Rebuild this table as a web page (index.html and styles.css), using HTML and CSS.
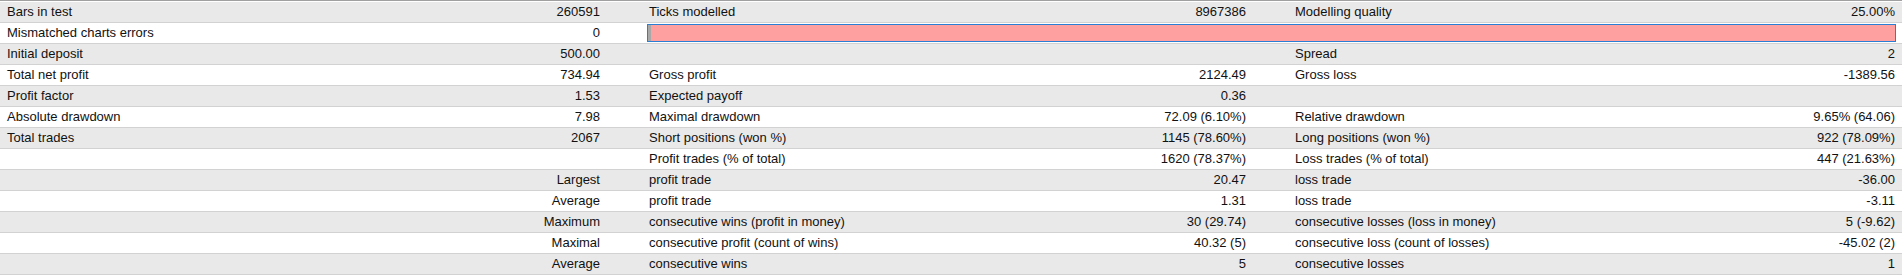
FILE: index.html
```html
<!DOCTYPE html>
<html>
<head>
<meta charset="utf-8">
<link rel="stylesheet" href="styles.css">
</head>
<body>
<div class="report">
  <div class="row alt">
    <div class="lbl">Bars in test</div><div class="val">260591</div>
    <div class="lbl2">Ticks modelled</div><div class="val2">8967386</div>
    <div class="lbl3">Modelling quality</div><div class="val3">25.00%</div>
  </div>
  <div class="row">
    <div class="lbl">Mismatched charts errors</div><div class="val">0</div>
    <div class="bar"><div class="bar-fill"></div></div>
  </div>
  <div class="row alt">
    <div class="lbl">Initial deposit</div><div class="val">500.00</div>
    <div class="lbl2"></div><div class="val2"></div>
    <div class="lbl3">Spread</div><div class="val3">2</div>
  </div>
  <div class="row">
    <div class="lbl">Total net profit</div><div class="val">734.94</div>
    <div class="lbl2">Gross profit</div><div class="val2">2124.49</div>
    <div class="lbl3">Gross loss</div><div class="val3">-1389.56</div>
  </div>
  <div class="row alt">
    <div class="lbl">Profit factor</div><div class="val">1.53</div>
    <div class="lbl2">Expected payoff</div><div class="val2">0.36</div>
    <div class="lbl3"></div><div class="val3"></div>
  </div>
  <div class="row">
    <div class="lbl">Absolute drawdown</div><div class="val">7.98</div>
    <div class="lbl2">Maximal drawdown</div><div class="val2">72.09 (6.10%)</div>
    <div class="lbl3">Relative drawdown</div><div class="val3">9.65% (64.06)</div>
  </div>
  <div class="row alt">
    <div class="lbl">Total trades</div><div class="val">2067</div>
    <div class="lbl2">Short positions (won %)</div><div class="val2">1145 (78.60%)</div>
    <div class="lbl3">Long positions (won %)</div><div class="val3">922 (78.09%)</div>
  </div>
  <div class="row">
    <div class="lbl"></div><div class="val"></div>
    <div class="lbl2">Profit trades (% of total)</div><div class="val2">1620 (78.37%)</div>
    <div class="lbl3">Loss trades (% of total)</div><div class="val3">447 (21.63%)</div>
  </div>
  <div class="row alt">
    <div class="lbl"></div><div class="val">Largest</div>
    <div class="lbl2">profit trade</div><div class="val2">20.47</div>
    <div class="lbl3">loss trade</div><div class="val3">-36.00</div>
  </div>
  <div class="row">
    <div class="lbl"></div><div class="val">Average</div>
    <div class="lbl2">profit trade</div><div class="val2">1.31</div>
    <div class="lbl3">loss trade</div><div class="val3">-3.11</div>
  </div>
  <div class="row alt">
    <div class="lbl"></div><div class="val">Maximum</div>
    <div class="lbl2">consecutive wins (profit in money)</div><div class="val2">30 (29.74)</div>
    <div class="lbl3">consecutive losses (loss in money)</div><div class="val3">5 (-9.62)</div>
  </div>
  <div class="row">
    <div class="lbl"></div><div class="val">Maximal</div>
    <div class="lbl2">consecutive profit (count of wins)</div><div class="val2">40.32 (5)</div>
    <div class="lbl3">consecutive loss (count of losses)</div><div class="val3">-45.02 (2)</div>
  </div>
  <div class="row alt">
    <div class="lbl"></div><div class="val">Average</div>
    <div class="lbl2">consecutive wins</div><div class="val2">5</div>
    <div class="lbl3">consecutive losses</div><div class="val3">1</div>
  </div>
</div>
</body>
</html>
```
FILE: styles.css
```css
html, body {
  margin: 0;
  padding: 0;
  background: #ffffff;
}
body {
  font-family: "Liberation Sans", Arial, sans-serif;
  font-size: 13px;
  color: #111111;
}
.report {
  width: 1902px;
  border-top: 1px solid #a0a0a0;
  padding-top: 1px;
}
.row {
  display: grid;
  grid-template-columns: 320px 323px 317px 330px 310px 302px;
  height: 20px;
  border-bottom: 1px solid #d2d2d2;
  background: #ffffff;
  line-height: 20px;
  white-space: nowrap;
}
.row.alt {
  background: #e9e9e9;
}
.lbl { padding-left: 7px; }
.val { text-align: right; padding-right: 43px; }
.lbl2 { padding-left: 6px; }
.val2 { text-align: right; padding-right: 44px; }
.lbl3 { padding-left: 5px; }
.val3 { text-align: right; padding-right: 7px; }
.bar {
  grid-column: 3 / 7;
  margin: 1px 6px 1px 4px;
  border: 1px solid #2a7fd4;
  background: #ffa0a0;
  display: flex;
}
.bar-fill {
  width: 3px;
  background: #a8a8a8;
}
```
